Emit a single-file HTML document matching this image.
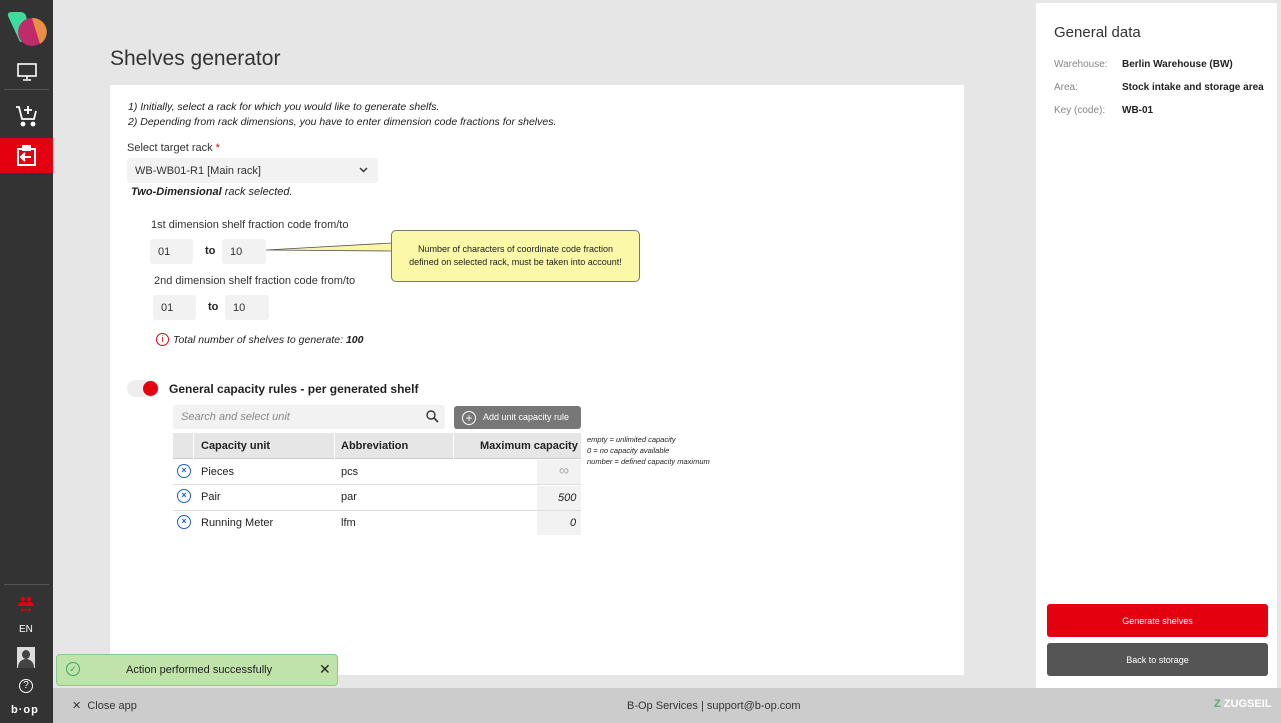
<!DOCTYPE html>
<html><head><meta charset="utf-8"><style>
*{box-sizing:border-box;margin:0;padding:0}
body{width:1281px;height:723px;overflow:hidden;background:#e6e6e6;font-family:"Liberation Sans",sans-serif;color:#222;position:relative}
.a{position:absolute}
.side{left:0;top:0;width:53px;height:723px;background:#333}
.inp{background:#f2f2f2;border-radius:3px;font-size:11px;color:#333;padding-left:8px;display:flex;align-items:center}
.t{font-size:11px}
</style></head><body>
<div class="a side">
 <svg class="a" style="left:6px;top:10px" width="42" height="38" viewBox="0 0 42 38"><path d="M2 6 Q1 2 6 2 L14 2 Q19 2 20 6 L26 30 L14 32 Z" fill="#3ddc9e"/><circle cx="26" cy="22" r="14" fill="#c02c6a"/><path d="M26 8 A14 14 0 0 1 34 34 Z" fill="#f0a040" opacity=".85"/></svg>
 <svg class="a" style="left:17px;top:63px" width="20" height="18" viewBox="0 0 20 18" fill="none" stroke="#fff" stroke-width="1.6"><rect x="1" y="1" width="18" height="12"/><path d="M10 13v3M6 17h8"/></svg>
 <div class="a" style="left:4px;top:89px;width:45px;height:1px;background:#555"></div>
 <svg class="a" style="left:15px;top:104px" width="24" height="24" viewBox="0 0 24 24" fill="none" stroke="#fff" stroke-width="1.8"><path d="M1 3h3l3 12h12l2-8M13 2v8M9 6h8"/><circle cx="8" cy="20" r="1.5" fill="#fff"/><circle cx="18" cy="20" r="1.5" fill="#fff"/></svg>
 <div class="a" style="left:0;top:138px;width:53px;height:35px;background:#e3000f"></div>
 <svg class="a" style="left:16px;top:145px" width="21" height="22" viewBox="0 0 21 22" fill="none" stroke="#fff" stroke-width="2"><rect x="2" y="4" width="17" height="16"/><rect x="7" y="1" width="7" height="4" fill="#fff"/><path d="M5 12h10M9 8l-4 4 4 4" fill="#fff"/></svg>
 <div class="a" style="left:4px;top:584px;width:45px;height:1px;background:#555"></div>
 <svg class="a" style="left:17px;top:596px" width="18" height="18" viewBox="0 0 18 18" fill="#e3000f"><circle cx="6" cy="3" r="2.2"/><circle cx="12" cy="3" r="2.2"/><path d="M1 10 Q1 6 6 6 Q9 6 9 8 Q9 6 12 6 Q17 6 17 10Z"/><path d="M4 14h10M4 14l2-1.5M4 14l2 1.5M14 14l-2-1.5M14 14l-2 1.5" stroke="#e3000f" stroke-width="1" fill="none"/></svg>
 <div class="a" style="left:19px;top:624px;color:#fff;font-size:10px">EN</div>
 <div class="a" style="left:17px;top:647px;width:18px;height:21px;background:#ddd;overflow:hidden"><div class="a" style="left:5px;top:3px;width:8px;height:9px;border-radius:50%;background:#444"></div><div class="a" style="left:1px;top:12px;width:16px;height:14px;border-radius:8px 8px 0 0;background:#444"></div></div>
 <div class="a" style="left:19px;top:679px;width:14px;height:14px;border:1.5px solid #fff;border-radius:50%;color:#fff;font-size:10px;text-align:center;line-height:11px">?</div>
 <div class="a" style="left:11px;top:704px;color:#fff;font-size:11px;font-weight:bold;letter-spacing:1px">b·op</div>
</div>
<div class="a" style="left:1036px;top:3px;width:241px;height:685px;background:#fff"></div>
<div class="a" style="left:1054px;top:24px;font-size:15px;color:#333">General data</div>
<div class="a t" style="left:1054px;top:53px;color:#888;line-height:23px;font-size:10px">Warehouse:<br>Area:<br>Key (code):</div>
<div class="a" style="left:1122px;top:53px;font-weight:bold;line-height:23px;font-size:10px">Berlin Warehouse (BW)<br>Stock intake and storage area<br>WB-01</div>
<div class="a" style="left:1047px;top:604px;width:221px;height:33px;background:#e3000f;border-radius:3px;color:#fff;font-size:9px;text-align:center;line-height:34px">Generate shelves</div>
<div class="a" style="left:1047px;top:643px;width:221px;height:33px;background:#555;border-radius:3px;color:#fff;font-size:9px;text-align:center;line-height:34px">Back to storage</div>
<div class="a" style="left:53px;top:688px;width:1228px;height:35px;background:#ccc"></div>
<div class="a" style="left:72px;top:699px;font-size:11px;color:#333">✕ &nbsp;Close app</div>
<div class="a" style="left:627px;top:700px;font-size:11px;color:#333">B-Op Services | support@b-op.com</div>
<div class="a" style="left:1214px;top:698px;font-size:11px;font-weight:bold;color:#fff"><span style="color:#5a6">Z</span> ZUGSEIL</div>
<div class="a" style="left:110px;top:47px;font-size:21px;color:#333">Shelves generator</div>
<div class="a" style="left:110px;top:85px;width:854px;height:590px;background:#fff"></div>
<div class="a t" style="left:128px;top:100px;font-style:italic;line-height:15px;font-size:10.5px">1) Initially, select a rack for which you would like to generate shelfs.<br>2) Depending from rack dimensions, you have to enter dimension code fractions for shelves.</div>
<div class="a t" style="left:127px;top:142px;color:#333">Select target rack <span style="color:#e3000f">*</span></div>
<div class="a inp" style="left:127px;top:158px;width:251px;height:25px">WB-WB01-R1 [Main rack]<svg class="a" style="right:10px;top:9px" width="9" height="6"><path d="M1 1l3.5 3.5L8 1" stroke="#333" stroke-width="1.4" fill="none"/></svg></div>
<div class="a t" style="left:131px;top:186px;font-style:italic"><b>Two-Dimensional</b> rack selected.</div>
<div class="a t" style="left:151px;top:219px;color:#333">1st dimension shelf fraction code from/to</div>
<div class="a inp" style="left:150px;top:239px;width:43px;height:25px">01</div>
<div class="a t" style="left:205px;top:245px;font-weight:bold">to</div>
<div class="a inp" style="left:222px;top:239px;width:44px;height:25px">10</div>
<div class="a t" style="left:154px;top:275px;color:#333">2nd dimension shelf fraction code from/to</div>
<div class="a inp" style="left:153px;top:295px;width:43px;height:25px">01</div>
<div class="a t" style="left:208px;top:301px;font-weight:bold">to</div>
<div class="a inp" style="left:225px;top:295px;width:44px;height:25px">10</div>
<svg class="a" style="left:266px;top:229px" width="130" height="40"><path d="M0 21 L126 14 L126 22 Z" fill="#fbf5a8" stroke="#555" stroke-width=".8"/></svg>
<div class="a" style="left:391px;top:230px;width:249px;height:52px;background:#fbf8a8;border:1px solid #777;border-radius:5px;font-size:9px;text-align:center;line-height:13px;padding-top:12px">Number of characters of coordinate code fraction<br>defined on selected rack, must be taken into account!</div>
<div class="a" style="left:156px;top:333px;width:13px;height:13px;border:1.2px solid #e3000f;border-radius:50%;color:#e3000f;font-size:9px;text-align:center;line-height:11px">i</div>
<div class="a t" style="left:173px;top:334px;font-style:italic;font-size:10.5px">Total number of shelves to generate: <b>100</b></div>
<div class="a" style="left:127px;top:380px;width:32px;height:17px;border-radius:9px;background:#eee"></div>
<div class="a" style="left:143px;top:381px;width:15px;height:15px;border-radius:50%;background:#e3000f"></div>
<div class="a" style="left:169px;top:382px;font-size:12px;font-weight:bold">General capacity rules - per generated shelf</div>
<div class="a inp" style="left:173px;top:405px;width:272px;height:24px;color:#888;font-style:italic">Search and select unit<svg class="a" style="right:6px;top:5px" width="13" height="13"><circle cx="5" cy="5" r="4" stroke="#333" stroke-width="1.4" fill="none"/><path d="M8 8l4 4" stroke="#333" stroke-width="1.6"/></svg></div>
<div class="a" style="left:454px;top:406px;width:127px;height:23px;background:#777;border-radius:3px;color:#fff;font-size:9px;line-height:23px;padding-left:8px"><span style="display:inline-block;width:14px;height:14px;border:1.2px solid #fff;border-radius:50%;text-align:center;line-height:12px;font-size:12px;vertical-align:middle">+</span>&nbsp;&nbsp; Add unit capacity rule</div>
<div class="a" style="left:173px;top:433px;width:408px;height:26px;background:#e6e6e6;border-bottom:1px solid #ccc"></div>
<div class="a" style="left:193px;top:433px;width:1px;height:26px;background:#fff"></div>
<div class="a" style="left:334px;top:433px;width:1px;height:26px;background:#fff"></div>
<div class="a" style="left:453px;top:433px;width:1px;height:26px;background:#fff"></div>
<div class="a t" style="left:201px;top:440px;font-weight:bold">Capacity unit</div>
<div class="a t" style="left:341px;top:440px;font-weight:bold">Abbreviation</div>
<div class="a t" style="left:480px;top:440px;font-weight:bold">Maximum capacity</div>
<div class="a" style="left:587px;top:434px;font-size:7.5px;font-style:italic;line-height:11px">empty = unlimited capacity<br>0 = no capacity available<br>number = defined capacity maximum</div>
<div class="a" style="left:173px;top:484px;width:408px;height:1px;background:#ddd"></div>
<div class="a" style="left:173px;top:510px;width:408px;height:1px;background:#ddd"></div>
<div class="a" style="left:537px;top:460px;width:44px;height:24px;background:#f2f2f2"></div>
<div class="a" style="left:537px;top:486px;width:44px;height:24px;background:#f2f2f2"></div>
<div class="a" style="left:537px;top:511px;width:44px;height:24px;background:#f2f2f2"></div>
<div class="a t" style="left:201px;top:466px">Pieces</div><div class="a t" style="left:341px;top:466px">pcs</div><div class="a" style="left:559px;top:462px;color:#aaa;font-size:14px">∞</div>
<div class="a t" style="left:201px;top:491px">Pair</div><div class="a t" style="left:341px;top:491px">par</div><div class="a t" style="left:558px;top:492px;font-style:italic">500</div>
<div class="a t" style="left:201px;top:517px">Running Meter</div><div class="a t" style="left:341px;top:517px">lfm</div><div class="a t" style="left:570px;top:517px;font-style:italic">0</div>
<div class="a" style="left:177px;top:464px;width:14px;height:14px;border:1.5px solid #1a5fcc;border-radius:50%;color:#1a5fcc;font-size:9px;font-weight:bold;text-align:center;line-height:11px">×</div>
<div class="a" style="left:177px;top:489px;width:14px;height:14px;border:1.5px solid #1a5fcc;border-radius:50%;color:#1a5fcc;font-size:9px;font-weight:bold;text-align:center;line-height:11px">×</div>
<div class="a" style="left:177px;top:515px;width:14px;height:14px;border:1.5px solid #1a5fcc;border-radius:50%;color:#1a5fcc;font-size:9px;font-weight:bold;text-align:center;line-height:11px">×</div>
<div class="a" style="left:56px;top:654px;width:282px;height:32px;background:#bfe3a8;border:1px solid #8c8;border-radius:4px"></div>
<div class="a" style="left:66px;top:662px;width:14px;height:14px;border:1.3px solid #3a6;border-radius:50%;color:#3a6;font-size:9px;text-align:center;line-height:12px">✓</div>
<div class="a t" style="left:126px;top:664px">Action performed successfully</div>
<div class="a" style="left:319px;top:661px;font-size:14px">✕</div>
</body></html>
